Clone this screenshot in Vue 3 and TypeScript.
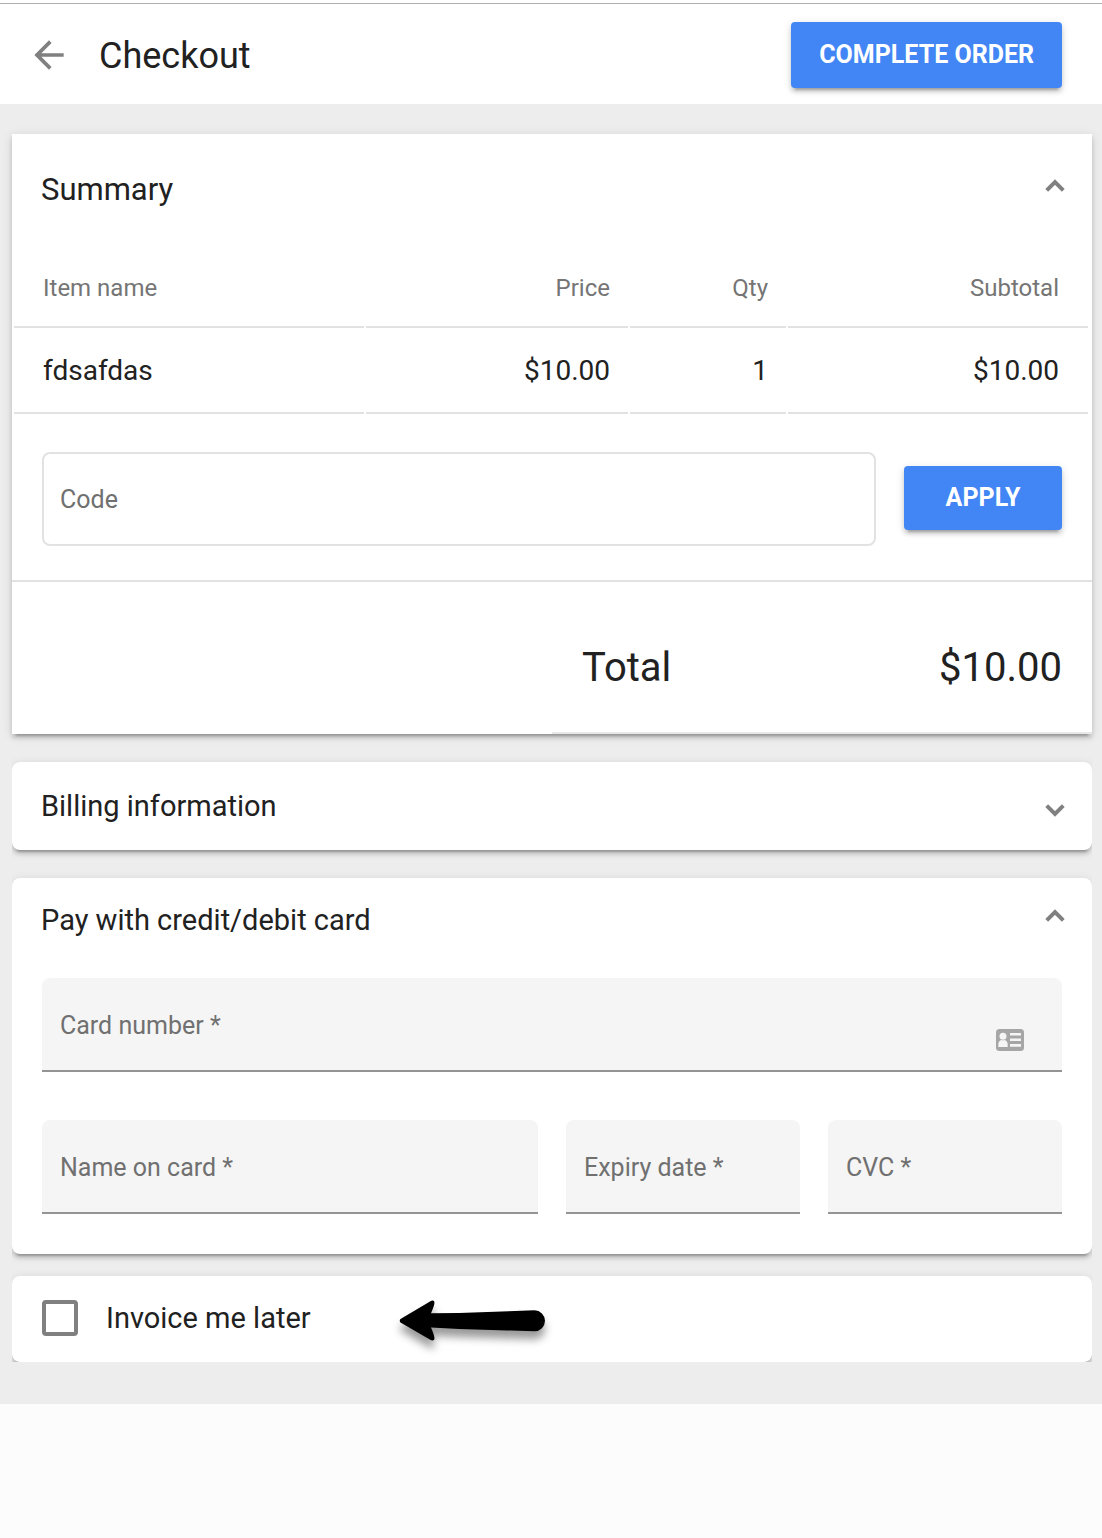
<script setup lang="ts">
import { computed, reactive, ref } from 'vue'

interface LineItem {
  name: string
  price: number
  qty: number
}

const items = ref<LineItem[]>([{ name: 'fdsafdas', price: 10, qty: 1 }])
const total = computed(() => items.value.reduce((sum, item) => sum + item.price * item.qty, 0))
const money = (value: number): string => `$${value.toFixed(2)}`

const code = ref('')
const card = reactive({ number: '', name: '', expiry: '', cvc: '' })
const invoiceLater = ref(false)
const open = reactive({ summary: true, billing: false, card: true })
</script>

<template>
  <div class="page">
    <header class="topbar">
      <button class="icon-button" type="button" aria-label="Back">
        <svg width="44" height="44" viewBox="0 0 24 24" fill="#808080">
          <path d="M20 11H7.83l5.59-5.59L12 4l-8 8 8 8 1.41-1.41L7.83 13H20v-2z" />
        </svg>
      </button>
      <h1>Checkout</h1>
      <button class="primary complete" type="button">COMPLETE ORDER</button>
    </header>

    <main>
      <section class="card summary">
        <div class="card-head">
          <h2>Summary</h2>
          <button class="icon-button chevron" type="button" aria-label="Toggle summary" @click="open.summary = !open.summary">
            <svg :class="{ down: !open.summary }" width="20" height="16" viewBox="0 0 20 16">
              <path d="M1.700 12.300 10 4l8.300 8.300" fill="none" stroke="#808080" stroke-width="4" />
            </svg>
          </button>
        </div>
        <template v-if="open.summary">
          <div class="table-wrap">
            <table>
              <colgroup>
                <col class="col-name" />
                <col class="col-price" />
                <col class="col-qty" />
                <col />
              </colgroup>
              <thead>
                <tr>
                  <th scope="col">Item name</th>
                  <th scope="col">Price</th>
                  <th scope="col">Qty</th>
                  <th scope="col">Subtotal</th>
                </tr>
              </thead>
              <tbody>
                <tr v-for="item in items" :key="item.name">
                  <td>{{ item.name }}</td>
                  <td>{{ money(item.price) }}</td>
                  <td>{{ item.qty }}</td>
                  <td>{{ money(item.price * item.qty) }}</td>
                </tr>
              </tbody>
            </table>
          </div>
          <form class="coupon" @submit.prevent>
            <label class="field outlined">
              <span v-show="!code">Code</span>
              <input v-model="code" type="text" />
            </label>
            <button class="primary apply" type="submit">APPLY</button>
          </form>
          <div class="total-row">
            <div class="total">
              <span>Total</span>
              <span>{{ money(total) }}</span>
            </div>
          </div>
        </template>
      </section>

      <section class="card rounded">
        <div class="card-head billing">
          <h2>Billing information</h2>
          <button class="icon-button chevron" type="button" aria-label="Toggle billing information" @click="open.billing = !open.billing">
            <svg :class="{ down: !open.billing }" width="20" height="16" viewBox="0 0 20 16">
              <path d="M1.700 12.300 10 4l8.300 8.300" fill="none" stroke="#808080" stroke-width="4" />
            </svg>
          </button>
        </div>
      </section>

      <section class="card rounded">
        <div class="card-head payment">
          <h2>Pay with credit/debit card</h2>
          <button class="icon-button chevron" type="button" aria-label="Toggle card payment" @click="open.card = !open.card">
            <svg :class="{ down: !open.card }" width="20" height="16" viewBox="0 0 20 16">
              <path d="M1.700 12.300 10 4l8.300 8.300" fill="none" stroke="#808080" stroke-width="4" />
            </svg>
          </button>
        </div>
        <form v-if="open.card" class="card-form" @submit.prevent>
          <label class="field filled wide">
            <span v-show="!card.number">Card number *</span>
            <input v-model="card.number" type="text" inputmode="numeric" />
            <svg class="id-icon" width="28" height="22" viewBox="0 0 28 22">
              <rect width="28" height="22" rx="3.5" fill="#a6a6a6" />
              <g fill="#f5f5f5">
                <circle cx="7" cy="7.2" r="3.5" />
                <path d="M2.3 18v-2.5c0-2.6 1.4-4.2 3-4.6 1 .6 2.4.6 3.4 0 1.6.4 3 2 3 4.6V18z" />
                <path d="M14 4h11v2.5H14zM14 9.5h11V12H14zM14 15h11v2.800H14z" />
              </g>
            </svg>
          </label>
          <label class="field filled">
            <span v-show="!card.name">Name on card *</span>
            <input v-model="card.name" type="text" />
          </label>
          <label class="field filled">
            <span v-show="!card.expiry">Expiry date *</span>
            <input v-model="card.expiry" type="text" />
          </label>
          <label class="field filled">
            <span v-show="!card.cvc">CVC *</span>
            <input v-model="card.cvc" type="text" />
          </label>
        </form>
      </section>

      <section class="card rounded invoice">
        <label class="check">
          <input v-model="invoiceLater" type="checkbox" />
          <span>Invoice me later</span>
        </label>
        <svg class="pointer" width="146" height="42" viewBox="0 0 146 42" aria-hidden="true">
          <path d="M1.500 19 31 1.500C34-.5 36 .5 35.300 4c-.8 3.500-2 6-3.300 9.200L60 13 135.500 10.300a10 10 0 0 1 0 21L60 29l-28-1.500c1.300 3 2.500 5.500 3.300 9.500.8 3.500-1.500 4.500-4.500 2.500L1.500 22.500Q0 20.700 1.500 19z" />
        </svg>
      </section>
    </main>
  </div>
</template>

<style>
body {
  margin: 0;
  background: #fbfcfb;
}
</style>

<style scoped>
.page {
  padding-top: 3px;
  background: #fff;
  color: #212121;
  font-family: Roboto, "Liberation Sans", sans-serif;
}

h1,
h2 {
  margin: 0;
  font-weight: 400;
}

h1 {
  flex: 1;
  padding-top: 2px;
  font-size: 36px;
  line-height: 44px;
}

h2 {
  font-size: 29px;
  line-height: 36px;
}

.summary h2 {
  font-size: 31px;
}

button {
  border: 0;
  padding: 0;
  font-family: inherit;
  cursor: pointer;
}

.icon-button {
  display: flex;
  background: none;
}

.topbar {
  display: flex;
  align-items: center;
  gap: 28px;
  padding: 18px 40px 16px 27px;
  border-top: 1px solid #b0b0b0;
  background: #fff;
}

.primary {
  border-radius: 4px;
  background: #4286f5;
  color: #fff;
  font-size: 25px;
  font-weight: 700;
  line-height: 32px;
  box-shadow: 0 6px 2px -4px rgba(0, 0, 0, 0.2), 0 4px 4px rgba(0, 0, 0, 0.14), 0 2px 10px rgba(0, 0, 0, 0.12);
}

.complete {
  height: 66px;
  padding: 0 28px;
}

.apply {
  flex: 0 0 158px;
  height: 64px;
  margin-bottom: 2px;
}

main {
  display: flex;
  flex-direction: column;
  gap: 28px;
  padding: 30px 10px 42px 12px;
  background: #ededed;
}

.card {
  background: #fff;
  box-shadow: 0 6px 2px -4px rgba(0, 0, 0, 0.2), 0 4px 4px rgba(0, 0, 0, 0.14), 0 2px 10px rgba(0, 0, 0, 0.12);
}

.rounded {
  border-radius: 8px;
  clip-path: inset(-12px 0);
}

.card-head {
  display: flex;
  align-items: center;
  justify-content: space-between;
  padding: 0 27px 0 29px;
}

.summary .card-head {
  height: 112px;
}

.billing {
  height: 88px;
}

.payment {
  height: 84px;
}

.chevron {
  padding-bottom: 8px;
}

.billing .chevron {
  padding: 8px 0 0;
}

.down {
  transform: rotate(180deg);
}

.table-wrap {
  padding-right: 2px;
}

table {
  width: 100%;
  table-layout: fixed;
  border-collapse: separate;
  border-spacing: 2px;
}

.col-name {
  width: 350px;
}

.col-price {
  width: 262px;
}

.col-qty {
  width: 156px;
}

th,
td {
  box-sizing: border-box;
  padding: 0 18px 0 0;
  border-bottom: 2px solid #e2e2e2;
  font-weight: 400;
  text-align: right;
}

th {
  height: 80px;
  padding-top: 2px;
  color: #757575;
  font-size: 24px;
}

td {
  height: 84px;
  padding-bottom: 2px;
  font-size: 28px;
}

th:first-child,
td:first-child {
  padding-right: 0;
  padding-left: 29px;
  text-align: left;
}

th:last-child,
td:last-child {
  padding-right: 29px;
}

.coupon {
  display: flex;
  align-items: center;
  gap: 28px;
  padding: 36px 30px 34px;
}

.field {
  position: relative;
  display: block;
  box-sizing: border-box;
  height: 94px;
}

.field > span {
  position: absolute;
  top: 0;
  left: 18px;
  color: #707070;
  font-size: 25px;
  line-height: 96px;
  pointer-events: none;
}

.field input {
  box-sizing: border-box;
  width: 100%;
  height: 100%;
  padding: 0 18px;
  outline: 0;
  color: inherit;
  font-family: inherit;
  font-size: 25px;
}

.outlined {
  flex: 1;
}

.outlined input {
  border: 2px solid #e2e2e2;
  border-radius: 8px;
  background: #fff;
}

.filled input {
  border: 0;
  border-radius: 8px 8px 0 0;
  background: #f5f5f5;
}

.filled {
  border-bottom: 2px solid #949494;
}

.id-icon {
  position: absolute;
  right: 38px;
  bottom: 19px;
}

.total-row {
  border-top: 2px solid #e2e2e2;
}

.total {
  display: flex;
  justify-content: space-between;
  box-sizing: border-box;
  width: 50%;
  margin-left: auto;
  padding: 64px 30px 42px;
  border-bottom: 2px solid #e8e8e8;
  font-size: 40px;
  line-height: 44px;
}

.card-form {
  display: grid;
  grid-template-columns: 496fr 234fr 234fr;
  gap: 48px 28px;
  padding: 16px 30px 40px;
}

.wide {
  grid-column: 1 / -1;
}

.invoice {
  position: relative;
  margin-top: -6px;
  padding: 24px 30px 26px;
  clip-path: inset(-12px 0 0);
}

.check {
  display: flex;
  align-items: center;
  gap: 28px;
  font-size: 29px;
  line-height: 36px;
}

.check input {
  appearance: none;
  box-sizing: border-box;
  width: 36px;
  height: 36px;
  margin: 0;
  border: 4px solid #808080;
  border-radius: 4px;
}

.check input:checked {
  background: #4286f5;
}

.pointer {
  position: absolute;
  top: 24px;
  left: 387px;
  overflow: visible;
  filter: drop-shadow(0 8px 4px rgba(0, 0, 0, 0.4));
}
</style>
